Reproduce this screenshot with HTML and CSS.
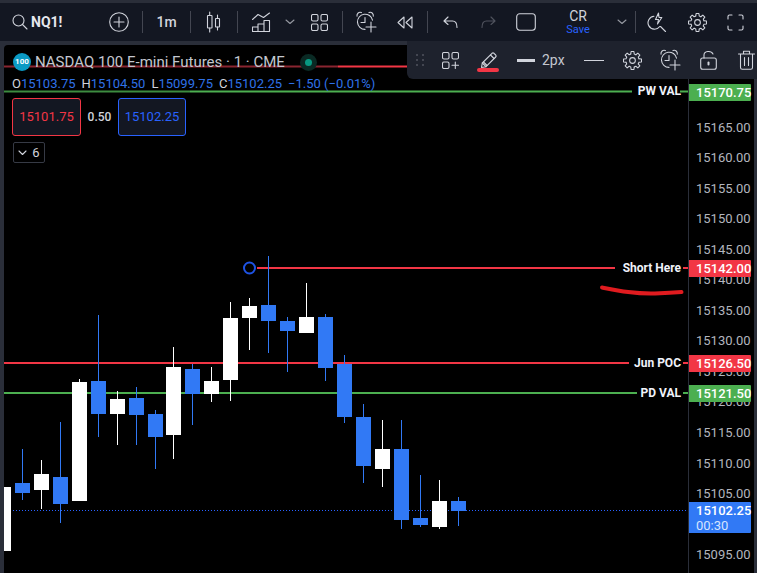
FILE: index.html
```html
<!DOCTYPE html>
<html lang="en">
<head>
<meta charset="utf-8">
<title>NQ1! chart</title>
<link rel="stylesheet" href="styles.css">
</head>
<body>
<svg class="defs" width="0" height="0" aria-hidden="true">
  <defs>
    <symbol id="gear" viewBox="-11 -11 22 22">
      <g class="ic">
        <circle r="3"/>
        <path id="tooth" d="M6.76-1.81 9.38-1.49V1.49L6.76 1.81 6.06 3.5"/>
        <use href="#tooth" transform="rotate(45)"/>
        <use href="#tooth" transform="rotate(90)"/>
        <use href="#tooth" transform="rotate(135)"/>
        <use href="#tooth" transform="rotate(180)"/>
        <use href="#tooth" transform="rotate(225)"/>
        <use href="#tooth" transform="rotate(270)"/>
        <use href="#tooth" transform="rotate(315)"/>
      </g>
    </symbol>
    <symbol id="alarm" viewBox="0 0 21 22">
      <g class="ic">
        <path d="M16.5 9.2A7.6 7.6 0 1 0 9 18.4"/>
        <path d="M9 6.5V11.5H5"/>
        <path d="M1 5.2C.6 2.6 3 .4 5.4 1.6M13 1.6C15.300.4 17.700 2.600 17.300 5.200"/>
        <path d="M15 11V21M10 16H20"/>
      </g>
    </symbol>
  </defs>
</svg>

<div class="app">
  <header class="topbar">
    <div class="tb sym">
      <svg width="18" height="18" viewBox="0 0 18 18"><g class="ic"><circle cx="7.500" cy="7.500" r="5.500"/><path d="M11.500 11.500 16 16"/></g></svg>
      <span class="sym-name">NQ1!</span>
    </div>
    <div class="tb"><svg width="20" height="20" viewBox="0 0 20 20"><g class="ic"><circle cx="10" cy="10" r="9.300"/><path d="M10 5V15M5 10H15"/></g></svg></div>
    <i class="sep"></i>
    <div class="tb interval">1m</div>
    <i class="sep"></i>
    <div class="tb"><svg width="16" height="22" viewBox="0 0 16 22"><g class="ic"><rect x="1.500" y="4.500" width="4.500" height="12.500" rx=".5"/><path d="M3.700 1V4.500M3.700 17V21"/><rect x="9.500" y="7.500" width="4" height="8.500" rx=".5"/><path d="M11.500 4V7.500M11.500 16V19"/></g></svg></div>
    <i class="sep"></i>
    <div class="tb"><svg width="19" height="20" viewBox="0 0 19 20"><g class="ic"><path d="M.5 7.500 6 2.500 11.500 5.500 17.500 1"/><path d="M.5 19.500V15H6V19.500ZM6 19.500V12H12V19.500ZM12 19.500V8.500H17.500V19.500Z"/></g></svg></div>
    <div class="tb"><svg width="10" height="6" viewBox="0 0 10 6"><path class="ic dim" d="M1 1 5 4.500 9 1"/></svg></div>
    <div class="tb">
      <svg width="17" height="17" viewBox="0 0 17 17"><g class="ic"><rect x=".5" y=".5" width="6.500" height="6.500" rx="1.500"/><rect x="10" y=".5" width="6.500" height="6.500" rx="1.500"/><rect x=".5" y="10" width="6.500" height="6.500" rx="1.500"/><rect x="10" y="10" width="6.500" height="6.500" rx="1.500"/></g></svg>
    </div>
    <i class="sep"></i>
    <div class="tb"><svg class="ico-alarm"><use href="#alarm"/></svg></div>
    <div class="tb rewind"><svg width="16" height="13" viewBox="0 0 16 13"><g class="ic"><path d="M7 1 1 6.500 7 12Z"/><path d="M15 1 9 6.500 15 12Z"/></g></svg></div>
    <i class="sep"></i>
    <div class="tb"><svg width="15" height="12" viewBox="0 0 15 12"><path class="ic" d="M5 1 1 5 5 8.500M1 5H9.500C12.500 5 14 7 14 11.500"/></svg></div>
    <div class="tb"><svg width="15" height="12" viewBox="0 0 15 12"><path class="ic off" d="M10 1 14 5 10 8.500M14 5H5.500C2.500 5 1 7 1 11.500"/></svg></div>
    <div class="tb"><svg width="20" height="18" viewBox="0 0 20 18"><rect class="ic" x=".7" y=".7" width="18.600" height="16.600" rx="3"/></svg></div>
    <div class="tb layout">
      <span class="layout-name">CR</span>
      <span class="layout-save">Save</span>
    </div>
    <div class="tb"><svg width="10" height="6" viewBox="0 0 10 6"><path class="ic dim" d="M1 1 5 4.500 9 1"/></svg></div>
    <i class="sep"></i>
    <div class="tb"><svg width="20" height="20" viewBox="0 0 20 20"><g class="ic"><path d="M12.800 14.500A6.500 6.500 0 1 1 7 4.200"/><path d="M11.500 1 8.500 7.500H11.500L10.500 12 14.800 5.500H12Z"/><path d="M13.500 14.500 18.500 19.500"/></g></svg></div>
    <div class="tb"><svg class="ico-gear"><use href="#gear"/></svg></div>
    <div class="tb"><svg width="17" height="17" viewBox="0 0 17 17"><path class="ic" d="M1 5V2.500Q1 1 2.500 1H5M12 1H14.500Q16 1 16 2.500V5M16 12V14.500Q16 16 14.500 16H12M5 16H2.500Q1 16 1 14.500V12"/></svg></div>
  </header>

  <main class="workspace">
    <section class="pane">
      <svg class="plot" viewBox="4 45 684 528" preserveAspectRatio="none">
        <g class="lines">
          <path class="l-red" d="M338 66.500H407"/>
          <path class="l-red-dim" d="M4 66.500H338"/>
          <path class="l-green-dim" d="M4 91.500H190"/>
          <path class="l-green" d="M190 91.500H632M680 91.500H688"/>
          <path class="l-red" d="M257 268H615M683 268H688"/>
          <path class="l-red" d="M4 363H629M683 363H688"/>
          <path class="l-green" d="M4 393H637M683 393H688"/>
          <path class="l-last" d="M4 510.500H688"/>
        </g>
        <g class="wick-w">
          <path d="M41.500 460V509M79.500 379V382M117.500 391V445M173.500 347V459M211.500 367V402M230.500 302V401M249.500 298V350M306.500 283V333M382.500 420V487M439.500 480V529"/>
        </g>
        <g class="wick-b">
          <path d="M22.500 449V500M60.500 422V523M98.500 315V437M136.500 387V445M155.500 410V469M192.500 364V425M268.500 256V353M287.500 317V372M325.500 314V381M344.500 355V423M363.500 404V483M401.500 420V529M420.500 475V527M458.500 497V526"/>
        </g>
        <g class="up">
          <rect x="4" y="487" width="7" height="64"/>
          <rect x="34" y="474" width="15" height="16"/>
          <rect x="72" y="382" width="15" height="119"/>
          <rect x="110" y="399" width="15" height="15"/>
          <rect x="166" y="367" width="15" height="68"/>
          <rect x="204" y="381" width="15" height="13"/>
          <rect x="223" y="318" width="15" height="62"/>
          <rect x="242" y="306" width="15" height="12"/>
          <rect x="299" y="317" width="15" height="16"/>
          <rect x="375" y="449" width="15" height="20"/>
          <rect x="432" y="501" width="15" height="26"/>
        </g>
        <g class="down">
          <rect x="15" y="483" width="15" height="10"/>
          <rect x="53" y="477" width="15" height="27"/>
          <rect x="91" y="381" width="15" height="33"/>
          <rect x="129" y="398" width="15" height="17"/>
          <rect x="148" y="414" width="15" height="23"/>
          <rect x="185" y="369" width="15" height="25"/>
          <rect x="261" y="305" width="15" height="16"/>
          <rect x="280" y="321" width="15" height="10"/>
          <rect x="318" y="317" width="15" height="51"/>
          <rect x="337" y="364" width="15" height="53"/>
          <rect x="356" y="417" width="15" height="49"/>
          <rect x="394" y="449" width="15" height="71"/>
          <rect x="413" y="518" width="15" height="7"/>
          <rect x="451" y="501" width="15" height="10"/>
        </g>
        <circle class="anchor" cx="249.500" cy="268" r="5.500"/>
        <path class="scribble" d="M602 287.500C620 291 635 294 655 293.500 665 293 672 292.500 681.500 292"/>
      </svg>

      <div class="legend">
        <div class="title-row">
          <span class="badge100">100</span>
          <span class="title">NASDAQ 100 E-mini Futures · 1 · CME</span>
          <span class="status"><i></i></span>
        </div>
        <div class="ohlc">
          <span><b>O</b>15103.75</span>
          <span><b>H</b>15104.50</span>
          <span><b>L</b>15099.75</span>
          <span><b>C</b>15102.25</span>
          <span>−1.50 (−0.01%)</span>
        </div>
        <div class="quote">
          <span class="qbox bid">15101.75</span>
          <span class="spread">0.50</span>
          <span class="qbox ask">15102.25</span>
        </div>
        <div class="collapse">
          <svg width="9" height="6" viewBox="0 0 9 6"><path class="ic" d="M1 1 4.500 4.500 8 1"/></svg>
          <span>6</span>
        </div>
      </div>

      <span class="line-label ll-pw">PW VAL</span>
      <span class="line-label ll-short">Short Here</span>
      <span class="line-label ll-poc">Jun POC</span>
      <span class="line-label ll-pd">PD VAL</span>
    </section>

    <aside class="axis">
      <span class="tick">15170.00</span>
      <span class="tick">15165.00</span>
      <span class="tick">15160.00</span>
      <span class="tick">15155.00</span>
      <span class="tick">15150.00</span>
      <span class="tick">15145.00</span>
      <span class="tick">15140.00</span>
      <span class="tick">15135.00</span>
      <span class="tick">15130.00</span>
      <span class="tick">15125.00</span>
      <span class="tick">15120.00</span>
      <span class="tick">15115.00</span>
      <span class="tick">15110.00</span>
      <span class="tick">15105.00</span>
      <span class="tick">15100.00</span>
      <span class="tick">15095.00</span>

      <span class="tag green t-pw">15170.75</span>
      <span class="tag red t-short">15142.00</span>
      <span class="tag red t-poc">15126.50</span>
      <span class="tag green t-pd">15121.50</span>
      <span class="tag last"><b>15102.25</b><em>00:30</em></span>
    </aside>
  </main>

  <div class="drawbar">
    <div class="db"><svg width="10" height="14" viewBox="0 0 10 14"><path class="grip" d="M1 1h2v2H1zM7 1h2v2H7zM1 6h2v2H1zM7 6h2v2H7zM1 11h2v2H1zM7 11h2v2H7z"/></svg></div>
    <div class="db"><svg width="17" height="17" viewBox="0 0 17 17"><g class="ic"><rect x=".5" y=".5" width="6.500" height="6.500" rx="1.500"/><rect x="10" y=".5" width="6.500" height="6.500" rx="1.500"/><rect x=".5" y="10" width="6.500" height="6.500" rx="1.500"/><path d="M13.300 10V16.500M10 13.300H16.500"/></g></svg></div>
    <div class="db pencil">
      <svg width="17" height="17" viewBox="0 0 17 17"><g class="ic"><path d="M1.500 15.500 2.300 11 12 1.300Q13 .5 14 1.300L15.700 3Q16.500 4 15.700 5L6 14.700Z"/><path d="M10.500 3 14 6.500M3.500 10 7 13.500M2.300 11 6 14.700"/></g></svg>
      <i class="underline"></i>
    </div>
    <div class="db width"><i class="thick"></i><span>2px</span></div>
    <div class="db"><i class="thin"></i></div>
    <div class="db"><svg class="ico-gear"><use href="#gear"/></svg></div>
    <div class="db"><svg class="ico-alarm"><use href="#alarm"/></svg></div>
    <div class="db"><svg width="17" height="20" viewBox="0 0 17 20"><g class="ic"><rect x=".7" y="8" width="15.600" height="11.300" rx="2"/><path d="M4 8V5C4 1 11 0 13 4"/><path class="fat" d="M8.500 12.500V14.500"/></g></svg></div>
    <div class="db"><svg width="17" height="20" viewBox="0 0 17 20"><g class="ic"><path d="M.5 4H16.500M5.500 4V1.300H11.500V4M2.500 4V17.500Q2.500 19.300 4.300 19.300H12.700Q14.500 19.300 14.500 17.500V4M6.500 7.500V15.500M10.500 7.500V15.500"/></g></svg></div>
  </div>
</div>
</body>
</html>
```
FILE: styles.css
```css
* { box-sizing: border-box; }
html, body { margin: 0; height: 100%; background: #2a2e39; overflow: hidden; }
body { font-family: Roboto, "Liberation Sans", sans-serif; color: #d1d4dc; }

.defs { position: absolute; }
.ic { fill: none; stroke: #d1d4dc; stroke-width: 1.100; stroke-linecap: round; stroke-linejoin: round; }
.ic.dim { stroke: #9598a1; }
.ic.off { stroke: #50535e; }
.ic .fat { stroke-width: 2; }
.ico-gear { width: 21px; height: 21px; }
.ico-alarm { width: 21px; height: 22px; }

.app { position: relative; width: 757px; height: 573px; padding-top: 3px; display: flex; flex-direction: column; }

.topbar {
  height: 38px;
  flex: none;
  background: #131722;
  display: grid;
  grid-template-columns: 95px 47px 1px 47px 1px 46px 1px 46px 12px 46px 1px 46px 38px 1px 44px 33px 42px 62px 26px 1px 42px 38px 38px;
  align-items: center;
  justify-items: center;
}
.tb { display: flex; align-items: center; justify-content: center; height: 100%; width: 100%; }
.tb svg { display: block; }
.sep { display: block; width: 1px; height: 22px; background: #434651; }
.sym { justify-content: flex-start; padding-left: 11px; gap: 2px; }
.sym-name { font-size: 14px; font-weight: 700; color: #e6e8ee; }
.interval { font-size: 14px; font-weight: 500; }
.rewind { padding-right: 7px; }
.layout { flex-direction: column; }
.layout-name { font-size: 14px; line-height: 15px; }
.layout-save { font-size: 11px; line-height: 11px; color: #2962ff; }

.workspace { flex: 1; min-height: 0; margin: 4px 0 0 4px; display: flex; }

.pane { position: relative; width: 684px; flex: none; background: #000; border-top-left-radius: 4px; overflow: hidden; }
.plot { position: absolute; inset: 0; width: 684px; height: 528px; display: block; }

.lines path { fill: none; stroke-width: 2; }
.l-red { stroke: #f23645; }
.l-green { stroke: #4caf50; }
.l-red-dim { stroke: #8a2530; }
.l-green-dim { stroke: #3d8c40; }
path.l-last { stroke: #2962ff; stroke-width: 1; stroke-dasharray: 1 2; }
.wick-w path, .wick-b path { fill: none; stroke-width: 1; }
.wick-w path { stroke: #fff; }
.wick-b path { stroke: #3179f5; }
.up rect { fill: #fff; }
.down rect { fill: #3179f5; }
.anchor { fill: #000; stroke: #1e53e5; stroke-width: 2; }
.scribble { fill: none; stroke: #e01b1f; stroke-width: 4; stroke-linecap: round; }

.legend { position: absolute; left: 9px; top: 8px; display: flex; flex-direction: column; align-items: flex-start; }
.title-row { display: flex; align-items: center; height: 18px; }
.badge100 {
  width: 18px; height: 18px; border-radius: 50%;
  background: #0b9ac4; color: #fff;
  font-size: 8px; font-weight: 700; line-height: 18px; text-align: center;
}
.title { margin-left: 4px; font-size: 15px; color: #c4c7cf; white-space: nowrap; }
.status { width: 17px; height: 17px; margin-left: 15px; border-radius: 50%; background: #0a2a24; display: flex; align-items: center; justify-content: center; }
.status i { width: 7px; height: 7px; border-radius: 50%; background: #089981; }

.ohlc { margin: 3px 0 0 -1px; height: 20px; display: flex; gap: 6px; font-size: 13px; line-height: 20px; color: #2f72e8; white-space: nowrap; }
.ohlc b { font-weight: 400; color: #d1d4dc; }

.quote { margin: 4px 0 0 -1px; display: flex; align-items: center; }
.qbox { width: 69px; height: 38px; border: 1px solid; border-radius: 3px; background: #131722; font-size: 13px; line-height: 36px; text-align: center; }
.bid { border-color: #f23645; color: #f23645; }
.ask { width: 68px; border-color: #2962ff; color: #2962ff; }
.spread { width: 37px; text-align: center; font-size: 12px; font-weight: 500; color: #d1d4dc; }

.collapse { margin-top: 6px; width: 32px; height: 21px; border: 1px solid #363a45; border-radius: 2px; display: flex; align-items: center; justify-content: center; gap: 5px; font-size: 13px; }

.line-label { position: absolute; font-size: 12px; font-weight: 700; line-height: 14px; color: #f0f3fa; white-space: nowrap; transform: translate(-100%, -50%); }
.ll-pw { left: 677px; top: 46px; }
.ll-short { left: 677px; top: 223px; }
.ll-poc { left: 677px; top: 318px; }
.ll-pd { left: 677px; top: 348px; }

.axis { position: relative; width: 66px; flex: none; margin-right: 3px; background: #000; border-left: 1px solid #2a2e39; padding-top: 37px; display: flex; flex-direction: column; }
.tick { height: 30.550px; line-height: 30.550px; padding-left: 7px; font-size: 13px; color: #b2b5be; white-space: nowrap; }

.tag { position: absolute; left: 0; width: 62px; height: 17px; padding-left: 7px; font-size: 13px; font-weight: 500; line-height: 17px; color: #fff; border-radius: 0 1px 1px 0; }
.green { background: #4caf50; }
.red { background: #f23645; }
.t-pw { top: 39px; }
.t-short { top: 215px; }
.t-poc { top: 310px; }
.t-pd { top: 340px; }
.last { top: 457px; height: 31px; background: #3179f5; display: flex; flex-direction: column; line-height: 15px; padding-top: 1px; }
.last b { font-weight: 500; }
.last em { font-style: normal; font-weight: 400; color: #d6e4ff; }

.drawbar {
  position: absolute; left: 407px; top: 41px;
  width: 350px; height: 38px;
  background: #1e222d;
  border-bottom-left-radius: 6px;
  overflow: hidden;
  display: grid;
  grid-template-columns: 25px 37px 38px 67px 40px 36px 40px 36px 40px;
  align-items: center;
}
.db { position: relative; display: flex; align-items: center; justify-content: center; height: 100%; }
.db svg { display: block; }
.grip { fill: #434651; }
.underline { position: absolute; left: 8px; top: 27px; width: 22px; height: 4px; border-radius: 2px; background: #f23645; }
.width { justify-content: flex-start; padding-left: 10px; gap: 7px; font-size: 14px; color: #c4c7cf; }
.thick { width: 18px; height: 3px; background: #d1d4dc; }
.thin { width: 20px; height: 1px; background: #d1d4dc; }
```
